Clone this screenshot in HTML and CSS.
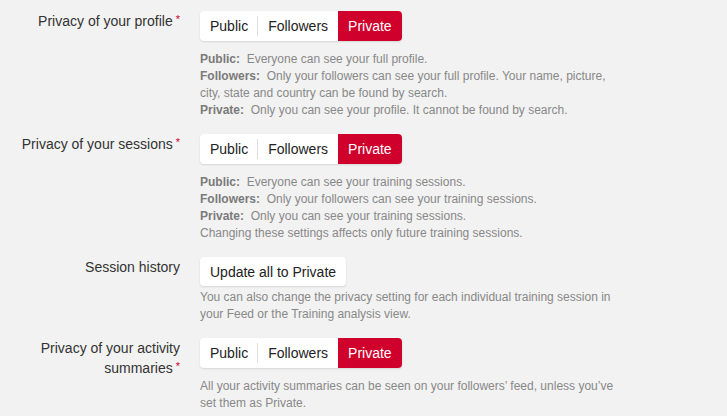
FILE: index.html
```html
<!DOCTYPE html>
<html lang="en">
<head>
  <meta charset="UTF-8">
  <title>Privacy settings</title>
  <link rel="stylesheet" href="styles.css">
</head>
<body>
  <div class="settings">

    <div class="row">
      <label class="row-label">Privacy of your profile<span class="req">*</span></label>
      <div class="row-control">
        <div class="toggle">
          <button class="opt opt-first">Public</button>
          <button class="opt">Followers</button>
          <button class="opt active">Private</button>
        </div>
        <div class="help">
          <b>Public:</b>&nbsp; Everyone can see your full profile.<br>
          <b>Followers:</b>&nbsp; Only your followers can see your full profile. Your name, picture, city, state and country can be found by search.<br>
          <b>Private:</b>&nbsp; Only you can see your profile. It cannot be found by search.
        </div>
      </div>
    </div>

    <div class="row">
      <label class="row-label">Privacy of your sessions<span class="req">*</span></label>
      <div class="row-control">
        <div class="toggle">
          <button class="opt opt-first">Public</button>
          <button class="opt">Followers</button>
          <button class="opt active">Private</button>
        </div>
        <div class="help">
          <b>Public:</b>&nbsp; Everyone can see your training sessions.<br>
          <b>Followers:</b>&nbsp; Only your followers can see your training sessions.<br>
          <b>Private:</b>&nbsp; Only you can see your training sessions.<br>
          Changing these settings affects only future training sessions.
        </div>
      </div>
    </div>

    <div class="row">
      <label class="row-label">Session history</label>
      <div class="row-control">
        <button class="btn">Update all to Private</button>
        <div class="help help-tight">
          You can also change the privacy setting for each individual training session in your Feed or the Training analysis view.
        </div>
      </div>
    </div>

    <div class="row">
      <label class="row-label">Privacy of your activity summaries<span class="req">*</span></label>
      <div class="row-control">
        <div class="toggle">
          <button class="opt opt-first">Public</button>
          <button class="opt">Followers</button>
          <button class="opt active">Private</button>
        </div>
        <div class="help">
          All your activity summaries can be seen on your followers’ feed, unless you’ve set them as Private.
        </div>
      </div>
    </div>

  </div>
</body>
</html>
```

FILE: styles.css
```css
* {
  box-sizing: border-box;
  margin: 0;
  padding: 0;
  font-family: 'Liberation Sans', Arial, sans-serif;
}

body {
  background: #f2f2f2;
  color: #333;
}

.settings {
  padding-top: 11px;
}

.row {
  display: grid;
  grid-template-columns: 180px 420px;
  column-gap: 20px;
  margin-bottom: 15px;
}

.row-label {
  text-align: right;
  font-size: 14px;
  line-height: 20px;
  color: #333;
  padding-left: 20px;
}

/* little red star, sits high next to the label */
.req {
  position: relative;
  top: -3px;
  color: #d0002c;
  font-size: 11px;
  line-height: 10px;
  margin-left: 3px;
}

.toggle {
  display: inline-flex;
  background: #fff;
  border-radius: 4px;
  box-shadow: 0 1px 2px rgba(0, 0, 0, 0.12);
}

.opt {
  position: relative;
  border: none;
  background: none;
  font-size: 14px;
  color: #222;
  height: 30px;
  padding: 0 10px;
  cursor: pointer;
}

.opt-first::after {
  content: "";
  position: absolute;
  right: 0;
  top: 5px;
  height: 20px;
  width: 1px;
  background: #ddd;
}

.opt.active {
  background: #d0002c;
  color: #fff;
  border-radius: 0 4px 4px 0;
}

.btn {
  border: none;
  background: #fff;
  font-size: 14px;
  color: #222;
  height: 29px;
  padding: 0 10px;
  border-radius: 4px;
  box-shadow: 0 1px 2px rgba(0, 0, 0, 0.12);
  cursor: pointer;
}

.help {
  margin-top: 10px;
  font-size: 12px;
  line-height: 17px;
  color: #888;
}

.help b {
  color: #7a7a7a;
}

.help-tight {
  margin-top: 3px;
}
```
